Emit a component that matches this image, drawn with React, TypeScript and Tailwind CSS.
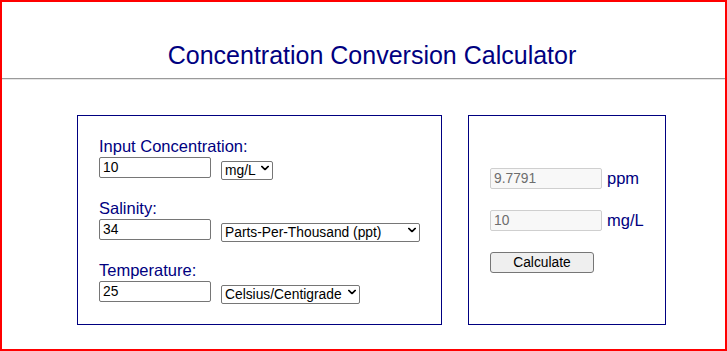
import { useState } from 'react';

// Small chevron drawn over the native select (appearance reset by the styles)
function Chevron() {
  return (
    <svg
      width="8"
      height="5"
      viewBox="0 0 10 6"
      className="pointer-events-none absolute right-[4px] top-1/2 -translate-y-1/2"
    >
      <path d="M1 1l4 4 4-4" fill="none" stroke="#000" strokeWidth="2" strokeLinecap="round" strokeLinejoin="round" />
    </svg>
  );
}

interface SelectProps {
  width: string;
  options: string[];
}

function Select({ width, options }: SelectProps) {
  return (
    <div className={`relative h-[19px] ${width}`}>
      <select className="h-full w-full appearance-none rounded-[2px] border border-[#767676] bg-white pl-[3px] pr-[14px] text-[13.8px] leading-[17px] text-black outline-none">
        {options.map((o) => (
          <option key={o}>{o}</option>
        ))}
      </select>
      <Chevron />
    </div>
  );
}

interface FieldProps {
  label: string;
  value: string;
  select: React.ReactNode;
  last?: boolean;
}

function Field({ label, value, select, last }: FieldProps) {
  const [v, setV] = useState(value);
  return (
    <div className={last ? '' : 'mb-[21px]'}>
      <div className="h-[18px] text-[16.5px] leading-[18px] text-[#000080]">{label}</div>
      <div className="mt-[2px] flex h-[21px] items-center gap-[10px]">
        <input
          value={v}
          onChange={(e) => setV(e.target.value)}
          className="h-[21px] w-[112px] rounded-[2px] border border-[#767676] bg-white px-[3px] text-[13.8px] text-black outline-none"
        />
        {select}
      </div>
    </div>
  );
}

function Result({ value, unit }: { value: string; unit: string }) {
  return (
    <div className="flex h-[21px] items-center gap-[5px]">
      <input
        readOnly
        value={value}
        className="h-[21px] w-[112px] rounded-[2px] border border-[#cfcfcf] bg-[#f8f8f8] px-[3px] text-[13.8px] text-[#6d6d6d] outline-none"
      />
      <span className="text-[16.5px] leading-[18px] text-[#000080]">{unit}</span>
    </div>
  );
}

export default function App() {
  return (
    <div
      className="h-[351px] w-[727px] overflow-hidden border-2 border-[#ff0000] bg-white"
      style={{ fontFamily: '"Liberation Sans", Arial, sans-serif' }}
    >
      <div className="mt-[39px] flex justify-center pl-[17px]">
        <h1 className="text-[25px] leading-[28px] text-[#000080]">Concentration Conversion Calculator</h1>
      </div>

      <div className="mt-[9px] h-[2px] border-t border-b border-t-[#9a9a9a] border-b-[#e6e6e6]" />

      <div className="ml-[75px] mt-[35px] flex items-start">
        <div className="h-[210px] w-[365px] border border-[#000080] p-[21px]">
          <Field
            label="Input Concentration:"
            value="10"
            select={<Select width="w-[52px]" options={['mg/L', 'ppm']} />}
          />
          <Field
            label="Salinity:"
            value="34"
            select={<Select width="w-[199px]" options={['Parts-Per-Thousand (ppt)']} />}
          />
          <Field
            label="Temperature:"
            value="25"
            select={<Select width="w-[139px]" options={['Celsius/Centigrade', 'Fahrenheit']} />}
            last
          />
        </div>

        <div className="ml-[26px] flex h-[210px] w-[198px] flex-col justify-center gap-[21px] border border-[#000080] pl-[21px]">
          <Result value="9.7791" unit="ppm" />
          <Result value="10" unit="mg/L" />
          <button className="h-[21px] w-[104px] rounded-[3px] border border-[#767676] bg-[#efefef] text-[13.8px] text-black">
            Calculate
          </button>
        </div>
      </div>
    </div>
  );
}
